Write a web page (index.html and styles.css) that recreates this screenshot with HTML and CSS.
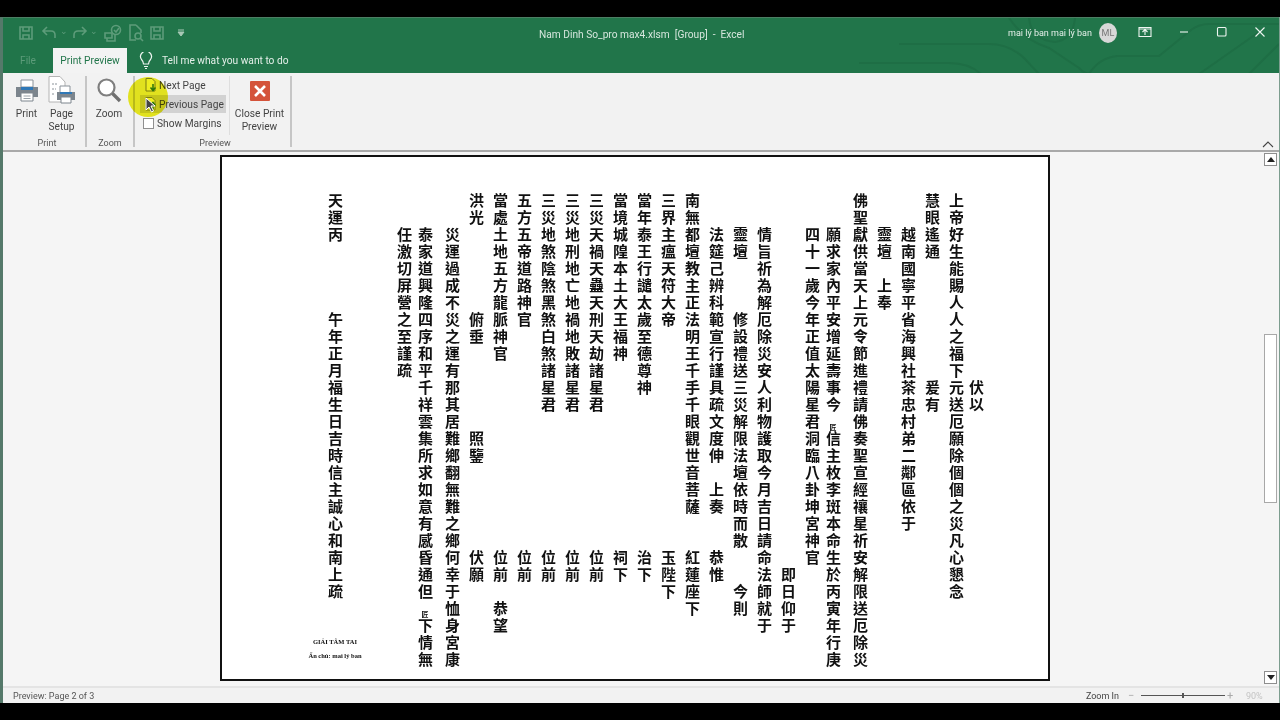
FILE: index.html
```html
<!DOCTYPE html>
<html lang="zh-Hant">
  <head>
    <meta charset="utf-8" />
    <title>Nam Dinh So_pro max4.xlsm - Excel</title>
    <link rel="stylesheet" href="styles.css">
  </head>
  <body>
    <div class="window">
      <div class="topArea">
        <svg class="circuit" width="420" height="56" viewBox="0 0 420 56">
          <path d="M0 45 H90 Q110 45 122 56 M40 26 H130 Q150 26 165 40 L180 56 M150 0 Q165 22 190 30 L220 50 Q225 56 232 56" />
          <path d="M170 0 Q172 22 196 24 Q214 22 216 0 M230 56 Q240 40 258 38 H300 L332 12 Q340 6 350 6 H420 M340 56 L400 14 M390 56 L420 26" />
        </svg>
        <div class="titleBar">
          <div class="quick">
            <svg class="qIcon" width="16" height="16" viewBox="0 0 16 16"><path d="M2 2 H14 V14 H2 Z M5 2 V6 H11 V2 M5 14 V10 H11 V14" /></svg>
            <svg class="qIcon undo" width="16" height="16" viewBox="0 0 16 16"><path d="M6 2 L2 6 L6 10 M2 6 H10 Q14 6 14 10 V13" /></svg>
            <span class="qDrop">&#8964;</span>
            <svg class="qIcon redo" width="16" height="16" viewBox="0 0 16 16"><path d="M10 2 L14 6 L10 10 M14 6 H6 Q2 6 2 10 V13" /></svg>
            <span class="qDrop">&#8964;</span>
            <svg class="qIcon touch" width="20" height="18" viewBox="0 0 20 18"><circle cx="13" cy="6" r="4.5" /><path d="M11 6 L13 8 L16 4 M2 9 H9 V14 H2 Z M4 14 V17 H12 V11" /></svg>
            <svg class="qIcon findDoc" width="16" height="18" viewBox="0 0 16 18"><path d="M8 1 H2 V16 H8 M8 1 L13 6 V9" /><circle cx="10" cy="12" r="3" /><path d="M12 14 L15 17" /></svg>
            <svg class="qIcon lastSave" width="16" height="16" viewBox="0 0 16 16"><path d="M2 2 H14 V14 H2 Z M5 2 V6 H11 V2 M5 14 V10 H11 V14" /></svg>
            <svg class="qMore" width="8" height="8" viewBox="0 0 8 8"><path d="M1 1 H7 M1 3 H7 L4 7 Z" /></svg>
          </div>
          <div class="docTitle">Nam Dinh So_pro max4.xlsm&nbsp; [Group]&nbsp; -&nbsp; Excel</div>
          <div class="account">
            <span class="userName">mai lý ban mai lý ban</span>
            <span class="avatar">ML</span>
          </div>
          <div class="winBtns">
            <svg width="14" height="12" viewBox="0 0 14 12"><path d="M1 1.5 H13 V10.5 H1 Z M7 9 V4 M4.5 6 L7 3.5 L9.5 6 M1 3 H13" /></svg>
            <svg width="12" height="12" viewBox="0 0 12 12"><path d="M2 6 H10" /></svg>
            <svg width="12" height="12" viewBox="0 0 12 12"><rect x="1.5" y="1.5" width="8.5" height="8.5" rx="1" /></svg>
            <svg width="12" height="12" viewBox="0 0 12 12"><path d="M1.5 1.5 L10.5 10.5 M10.5 1.5 L1.5 10.5" /></svg>
          </div>
        </div>
        <div class="tabs">
          <span class="tabFile">File</span>
          <span class="tabActive">Print Preview</span>
          <svg class="bulb" width="14" height="18" viewBox="0 0 14 18"><path d="M4.5 12 Q4.5 9.5 2.5 7.5 A5.4 5.4 0 1 1 11.5 7.5 Q9.5 9.5 9.5 12 Z M5 14.5 H9 M6 16.5 H8" /></svg>
          <span class="tellMe">Tell me what you want to do</span>
        </div>
      </div>

      <div class="ribbon">
        <div class="group groupPrint">
          <div class="groupItems">
            <div class="bigBtn">
              <svg width="24" height="24" viewBox="0 0 24 24">
                <path d="M6 2 H18 V9 H6 Z" fill="#fff" stroke="#8a9299" />
                <path d="M1 9 H23 V19 H1 Z" fill="#7c858d" />
                <path d="M6 9 H18 V12 H6 Z" fill="#2f78b7" />
                <path d="M6 15 H18 V23 H6 Z" fill="#fff" stroke="#7c858d" />
                <path d="M8.5 18 H15.5 M8.5 20.5 H15.5" stroke="#9aa2a9" />
              </svg>
              <span>Print</span>
            </div>
            <div class="bigBtn">
              <svg width="28" height="28" viewBox="0 0 28 28">
                <path d="M1 .5 H12 L17 6 V26 H1 Z" fill="#fff" stroke="#b4b4b4" />
                <path d="M4 8 H10 M4 13 H8 M4 18 H7" stroke="#8a9299" stroke-dasharray="2 1" />
                <path d="M12 10 H22 V17 H12 Z" fill="#fff" stroke="#8a9299" />
                <path d="M9 16 H27 V24 H9 Z" fill="#7c858d" />
                <path d="M12 16 H24 V18 H12 Z" fill="#2f78b7" />
                <path d="M13 21 H23 V27 H13 Z" fill="#fff" stroke="#7c858d" />
              </svg>
              <span>Page<br />Setup</span>
            </div>
          </div>
          <div class="groupName">Print</div>
        </div>
        <div class="group groupZoom">
          <div class="groupItems">
            <div class="bigBtn">
              <svg width="26" height="26" viewBox="0 0 26 26">
                <circle cx="10.5" cy="10.5" r="8" fill="#fff" stroke="#7f7f7f" stroke-width="2.2" />
                <path d="M16.5 16.5 L24 24" stroke="#6f6f6f" stroke-width="3.4" />
              </svg>
              <span>Zoom</span>
            </div>
          </div>
          <div class="groupName">Zoom</div>
        </div>
        <div class="group groupPreview">
          <div class="groupItems">
            <div class="smallBtns">
              <div class="smallBtn">
                <svg width="11" height="14" viewBox="0 0 11 14"><path d="M1 .5 H7 L10 3.5 V13 H1 Z" fill="#fff" stroke="#858585" /><path d="M8 6 V12 M5.5 9.5 L8 12.5 L10.5 9.5" fill="none" stroke="#2e7d46" stroke-width="1.5" /></svg>
                <span>Next Page</span>
              </div>
              <div class="smallBtn hover">
                <svg width="11" height="14" viewBox="0 0 11 14"><path d="M1 .5 H7 L10 3.5 V13 H1 Z" fill="#fff" stroke="#858585" /><path d="M8 12 V6 M5.5 8.5 L8 5.5 L10.5 8.5" fill="none" stroke="#2e7d46" stroke-width="1.5" /></svg>
                <span>Previous Page</span>
              </div>
              <div class="smallBtn">
                <span class="check"></span>
                <span>Show Margins</span>
              </div>
            </div>
            <div class="bigBtn closeBtn">
              <svg width="20" height="20" viewBox="0 0 20 20">
                <rect width="20" height="20" rx="1" fill="#d4533a" />
                <path d="M5 5 L15 15 M15 5 L5 15" stroke="#fff" stroke-width="2.6" />
              </svg>
              <span>Close Print<br />Preview</span>
            </div>
          </div>
          <div class="groupName">Preview</div>
        </div>
        <svg class="collapse" width="12" height="7" viewBox="0 0 12 7"><path d="M1 6 L6 1 L11 6" /></svg>
      </div>

      <div class="main">
        <div class="paper">
          <p class="col colNarrow">　　　　　　　　　　　伏以</p>
          <p class="col">上帝好生能賜人人之福下元送厄願除個個之災凡心懇念</p>
          <p class="col">慧眼遙通　　　　　　　爰有</p>
          <p class="col">　　越南國寧平省海興社茶忠村弟二鄰區依于</p>
          <p class="col">　　靈壇　上奉</p>
          <p class="col">佛聖獻供當天上元令節進禮請佛奏聖宣經禳星祈安解限送厄除災</p>
          <p class="col">　　願求家內平安增延壽事今<span class="tiny">匠</span>信主枚李斑本命生於丙寅年行庚</p>
          <p class="col">　　四十一歲今年正值太陽星君洞臨八卦坤宮神官</p>
          <p class="col">　　　　　　　　　　　　　　　　　　　　　　即日仰于</p>
          <p class="col">　　情旨祈為解厄除災安人利物護取今月吉日請命法師就于</p>
          <p class="col">　　靈壇　　　修設禮送三災解限法壇依時而散　　今則</p>
          <p class="col">　　法筵己辨科範宣行謹具疏文度伸　上奏　　恭惟</p>
          <p class="col">南無都壇教主正法明王千手千眼觀世音菩薩　　紅蓮座下</p>
          <p class="col">三界主瘟天符大帝　　　　　　　　　　　　　玉陛下</p>
          <p class="col">當年泰王行譴太歲至德尊神　　　　　　　　　治下</p>
          <p class="col">當境城隍本土大王福神　　　　　　　　　　　祠下</p>
          <p class="col">三災天禍天蠱天刑天劫諸星君　　　　　　　　位前</p>
          <p class="col">三災地刑地亡地禍地敗諸星君　　　　　　　　位前</p>
          <p class="col">三災地煞陰煞黑煞白煞諸星君　　　　　　　　位前</p>
          <p class="col">五方五帝道路神官　　　　　　　　　　　　　位前</p>
          <p class="col">當處土地五方龍脈神官　　　　　　　　　　　位前　恭望</p>
          <p class="col">洪光　　　　　俯垂　　　　　照鑒　　　　　伏願</p>
          <p class="col">　　災運過成不災之運有那其居難鄉翻無難之鄉何幸于恤身宮康</p>
          <p class="col">　　泰家道興隆四序和平千祥雲集所求如意有感昏通但<span class="tiny">匠</span>下情無</p>
          <p class="col">　　任激切屏營之至謹疏</p>
          <div class="tail">
            <p class="col">天運丙　　　　午年正月福生日吉時信主誠心和南上疏</p>
            <div class="sign">GIẢI TÂM TAI</div>
            <div class="signSub">Ấn chú: mai lý ban</div>
          </div>
        </div>
        <div class="scrollbar">
          <div class="scrollBtn"><svg width="8" height="5" viewBox="0 0 8 5"><path d="M4 0 L8 5 H0 Z" /></svg></div>
          <div class="thumb"></div>
          <div class="scrollBtn down"><svg width="8" height="5" viewBox="0 0 8 5"><path d="M0 0 H8 L4 5 Z" /></svg></div>
        </div>
      </div>

      <div class="statusBar">
        <span class="pageInfo">Preview: Page 2 of 3</span>
        <span class="zoomIn">Zoom In</span>
        <div class="zoomCtl">
          <span class="zoomSign">&#8722;</span>
          <span class="slider"><i></i></span>
          <span class="zoomSign">+</span>
          <span class="zoomVal">90%</span>
        </div>
      </div>

      <!-- screen recording cursor highlight -->
      <div class="spot"></div>
      <svg class="pointer" width="12" height="16" viewBox="0 0 12 16"><path d="M1 1 V13 L4 10 L6.5 15 L8.5 14 L6 9 H10 Z" /></svg>
    </div>
  </body>
</html>
```

FILE: styles.css
```css
* {
  box-sizing: border-box;
}
html,
body {
  margin: 0;
  height: 720px;
  overflow: hidden;
  background-color: #000;
}
body {
  padding: 17px 0;
  font-family: Roboto, "Open Sans", sans-serif;
  font-size: 10.2px;
  color: #444;
}
.window {
  position: relative;
  display: flex;
  flex-direction: column;
  height: 686px;
  background-color: #f5f5f5;
  border-left: 3px solid #55796a;
  border-right: 1px solid #7d9d8f;
  overflow: hidden;
}

/* title bar and tabs */
.topArea {
  position: relative;
  height: 56px;
  background-color: #21754a;
  border-top: 1px solid #4c7f63;
}
.circuit {
  position: absolute;
  right: 0;
  top: 0;
}
.circuit path {
  fill: none;
  stroke: #1e6e45;
  stroke-width: 2;
}
.titleBar {
  position: relative;
  display: flex;
  align-items: center;
  height: 30px;
}
.quick {
  display: flex;
  align-items: center;
  width: 187px;
  padding-left: 15px;
}
.qIcon {
  margin-right: 7px;
  fill: none;
  stroke: #5d9c7a;
  stroke-width: 1.6;
}
.undo {
  margin-right: 3px;
}
.redo {
  margin-right: 2px;
}
.touch {
  margin-left: 1px;
  margin-right: 5px;
}
.findDoc {
  margin-right: 5px;
}
.lastSave {
  margin-right: 0;
}
.qDrop {
  width: 12px;
  margin-top: -4px;
  color: #5d9c7a;
  font-size: 9px;
  text-align: left;
}
.qMore {
  margin-left: 12px;
  fill: #a8c9b6;
  stroke: #a8c9b6;
}
.docTitle {
  width: 818px;
  margin-top: 2px;
  padding-left: 349px;
  font-size: 10.2px;
  color: #d6e6dd;
  white-space: nowrap;
}
.account {
  display: flex;
  align-items: center;
  gap: 7px;
  width: 109px;
}
.userName {
  font-size: 9px;
  color: #e4efe9;
  white-space: nowrap;
}
.avatar {
  display: flex;
  align-items: center;
  justify-content: center;
  width: 20px;
  height: 20px;
  border-radius: 50%;
  background-color: #d8d8d8;
  font-size: 9px;
  color: #777;
}
.winBtns {
  display: flex;
  align-items: center;
  gap: 26px;
  margin: -2px 0 0 21px;
}
.winBtns svg {
  fill: none;
  stroke: #eef5f1;
  stroke-width: 1.1;
}
.tabs {
  position: relative;
  display: flex;
  align-items: center;
  height: 25px;
}
.tabFile {
  width: 50px;
  padding-left: 17px;
  color: #5d9c7a;
}
.tabActive {
  display: flex;
  align-items: center;
  justify-content: center;
  width: 74px;
  height: 25px;
  background-color: #f3f3f3;
  color: #21754a;
}
.bulb {
  margin-left: 12px;
  fill: none;
  stroke: #eef5f1;
  stroke-width: 1.2;
}
.tellMe {
  margin-left: 9px;
  color: #e4efe9;
}

/* ribbon */
.ribbon {
  position: relative;
  display: flex;
  height: 79px;
  padding: 3px 0 3px;
  background-color: #f2f2f2;
  border-bottom: 2px solid #a9a9a9;
}
.group {
  display: flex;
  flex-direction: column;
  border-right: 2px solid #c6c6c6;
}
.groupPrint {
  width: 84px;
  padding-left: 6px;
}
.groupZoom {
  width: 48px;
}
.groupPreview {
  width: 157px;
  padding-left: 5px;
}
.groupItems {
  display: flex;
  flex: 1;
}
.groupName {
  height: 12px;
  line-height: 16px;
  font-size: 9px;
  text-align: center;
  color: #555;
}
.bigBtn {
  display: flex;
  flex-direction: column;
  align-items: center;
  width: 35px;
  line-height: 13px;
  font-size: 10.2px;
  text-align: center;
  color: #444;
}
.bigBtn svg {
  height: 28px;
  margin-bottom: 3px;
}
.groupZoom .bigBtn {
  width: 44px;
}
.smallBtns {
  display: flex;
  flex-direction: column;
  width: 86px;
  gap: 1px;
}
.smallBtn {
  display: flex;
  align-items: center;
  gap: 3px;
  height: 18px;
  padding-left: 5px;
  white-space: nowrap;
  color: #444;
}
.hover {
  background-color: #d2d2d2;
}
.check {
  width: 11px;
  height: 11px;
  margin-left: -2px;
  background-color: #fff;
  border: 1px solid #8f8f8f;
}
.closeBtn {
  width: 60px;
  margin-left: 3px;
  padding-top: 5px;
  border-left: 1px solid #dedede;
}
.closeBtn svg {
  height: 20px;
  margin-bottom: 6px;
}
.collapse {
  position: absolute;
  right: 5px;
  bottom: 2px;
  fill: none;
  stroke: #444;
  stroke-width: 1.1;
}

/* page preview */
.main {
  display: flex;
  flex: 1;
  min-height: 0;
  padding-left: 217px;
}
.paper {
  flex: none;
  width: 830px;
  height: 526px;
  margin-top: 3px;
  padding: 36px 64px 0 0;
  writing-mode: vertical-rl;
  background-color: #fff;
  border: 2px solid #111;
  font-family: "Noto Sans CJK TC", "Noto Sans CJK SC", sans-serif;
  font-weight: 700;
  font-size: 15px;
  color: #111;
}
.col {
  width: 24px;
  margin: 0;
  line-height: 24px;
  letter-spacing: 2px;
  text-orientation: upright;
  white-space: nowrap;
}
.colNarrow {
  width: 16px;
  line-height: 16px;
}
.tiny {
  display: inline-block;
  width: 24px;
  height: 17px;
  padding-right: 3px;
  font-size: 7px;
  letter-spacing: 0;
  text-align: right;
}
.tail {
  display: flex;
  flex-direction: column;
  align-items: center;
  width: 60px;
  margin-right: 27px;
  writing-mode: horizontal-tb;
}
.tail .col {
  writing-mode: vertical-rl;
  height: 408px;
}
.sign,
.signSub {
  font-family: "Liberation Serif", serif;
  font-weight: 700;
  font-size: 6.5px;
  white-space: nowrap;
}
.sign {
  margin-top: 37px;
}
.signSub {
  margin-top: 7px;
}
.scrollbar {
  display: flex;
  flex-direction: column;
  width: 14px;
  margin: 1px 1px 2px auto;
}
.scrollBtn {
  display: flex;
  align-items: center;
  justify-content: center;
  width: 13px;
  height: 13px;
  background-color: #fff;
  border: 1px solid #8e8e8e;
}
.scrollBtn svg {
  fill: #222;
}
.down {
  margin-top: auto;
}
.thumb {
  width: 13px;
  height: 169px;
  margin-top: 168px;
  background-color: #fff;
  border: 1px solid #a8a8a8;
}

/* status bar */
.statusBar {
  display: flex;
  align-items: center;
  height: 17px;
  padding-left: 10px;
  background-color: #f2f2f2;
  border-top: 2px solid #e4e4e4;
  font-size: 9px;
  color: #555;
}
.zoomIn {
  margin-left: auto;
  color: #444;
}
.zoomCtl {
  display: flex;
  align-items: center;
  width: 160px;
  padding-left: 9px;
  color: #aaa;
}
.zoomSign {
  width: 12px;
  font-size: 11px;
}
.slider {
  position: relative;
  width: 84px;
  height: 1px;
  margin: 0 2px 0 1px;
  background-color: #555;
}
.slider i {
  position: absolute;
  left: 41px;
  top: -2px;
  width: 2px;
  height: 5px;
  background-color: #555;
}
.zoomVal {
  margin-left: 7px;
  color: #c4c4c4;
}

/* recording overlay */
.spot {
  position: absolute;
  left: 125px;
  top: 60px;
  width: 40px;
  height: 40px;
  border-radius: 50%;
  mix-blend-mode: multiply;
  background: radial-gradient(circle, #eeee20 78%, #f8f8c0 100%);
}
.pointer {
  position: absolute;
  left: 142px;
  top: 80px;
  fill: #444;
  stroke: #fff;
  stroke-width: 1;
}
```
